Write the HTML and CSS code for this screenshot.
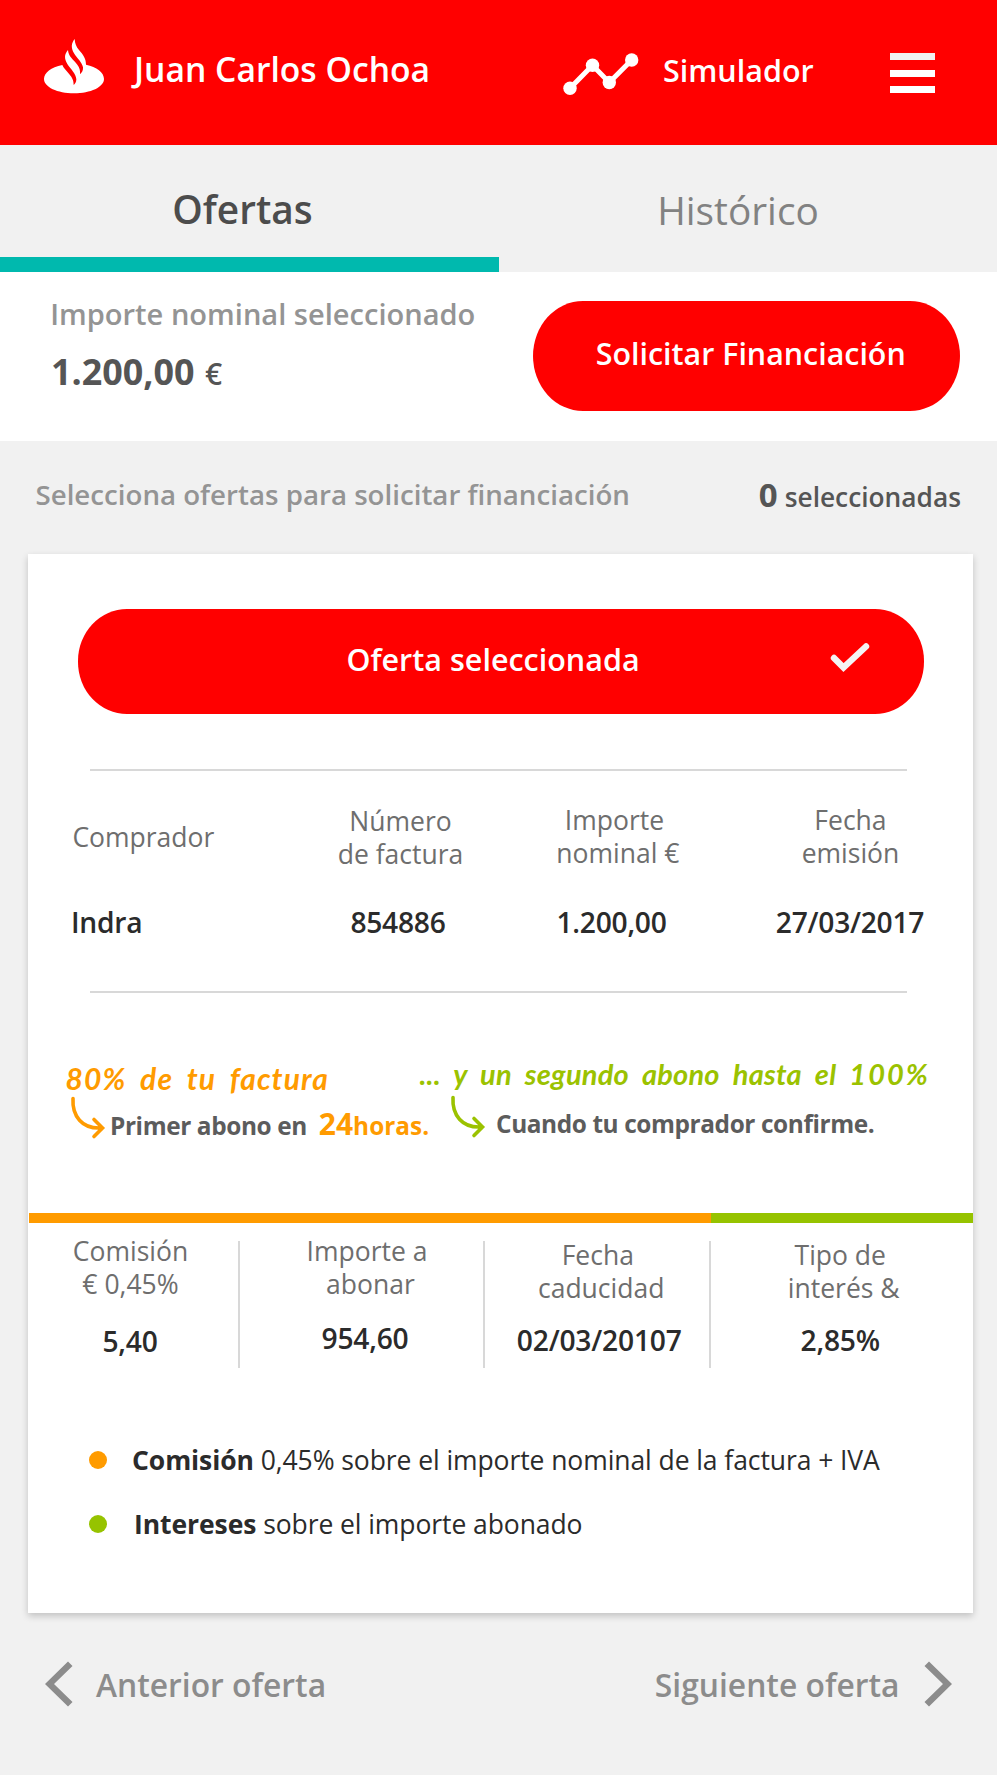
FILE: index.html
```html
<!DOCTYPE html>
<html lang="es">
<head>
    <meta charset="UTF-8">
    <meta name="viewport" content="width=device-width, initial-scale=1.0">
    <title>Ofertas</title>
    <link rel="stylesheet" href="styles.css">
</head>
<body>
    <div class="page">
        <header class="header">
            <svg class="logo" viewBox="0 0 240 222">
                <path fill="#fff" d="M79 105C45 112 24 128 24 147C24 171 64 190 114 190C164 190 204 171 204 147C204 127 182 111 150 104C150 85 141 74 129 60C120 49 117 41 116 27C106 40 104 52 114 70C124 86 138 97 141 112C142 121 138 128 132 133C133 120 131 114 124 104C112 88 97 80 96 60C84 74 85 86 94 102C104 118 120 130 121 148C121 157 117 162 113 165C113 150 108 143 100 133C90 120 83 115 79 105Z"/>
            </svg>
            <div class="user">Juan Carlos Ochoa</div>
            <svg class="chart" viewBox="0 0 80 46">
                <path fill="none" stroke="#fff" stroke-width="5" d="M10 38.3L32.5 15.3L49.3 32.5L71.7 10"/>
                <g fill="#fff">
                    <circle cx="10" cy="38.3" r="6.7"/>
                    <circle cx="32.5" cy="15.3" r="6.7"/>
                    <circle cx="49.3" cy="32.5" r="6.7"/>
                    <circle cx="71.7" cy="10" r="6.7"/>
                </g>
            </svg>
            <div class="simulator">Simulador</div>
            <div class="menu">
                <span></span>
                <span></span>
                <span></span>
            </div>
        </header>

        <nav class="tabs">
            <div class="tab active">Ofertas</div>
            <div class="tab">Histórico</div>
        </nav>

        <section class="summary">
            <div class="amount">
                <div class="amount-label">Importe nominal seleccionado</div>
                <div class="amount-value">1.200,00 <span>€</span></div>
            </div>
            <button type="button" class="btn request">Solicitar Financiación</button>
        </section>

        <div class="hint">
            <div class="hint-text">Selecciona ofertas para solicitar financiación</div>
            <div class="hint-count"><strong>0</strong><span>seleccionadas</span></div>
        </div>

        <main class="card">
            <button type="button" class="btn selected">
                Oferta seleccionada
                <svg class="check" viewBox="0 0 44 34">
                    <path fill="none" stroke="#f4f4f4" stroke-width="6.4" stroke-linecap="round" d="M4 16L13.5 25.6L36 4.5"/>
                </svg>
            </button>

            <hr>
            <div class="labels">
                <div class="buyer">Comprador</div>
                <div class="number">Número<br>de factura</div>
                <div>Importe<br>&nbsp;nominal €</div>
                <div>Fecha<br>emisión</div>
            </div>
            <div class="values">
                <div class="buyer">Indra</div>
                <div>854886</div>
                <div>1.200,00</div>
                <div>27/03/2017</div>
            </div>
            <hr class="second">

            <div class="payments">
                <div class="payment first">
                    <div class="note">80% de tu factura</div>
                    <div class="detail">
                        <svg class="arrow" viewBox="0 0 39 44">
                            <path d="M3 2.5C2 20 12 33 31 32M24 23.5L32.5 32L24 40.5"/>
                        </svg>
                        <span class="detail-text">Primer abono en</span>
                        <span class="hours"><big>24</big>horas.</span>
                    </div>
                </div>
                <div class="payment last">
                    <div class="note">... y un segundo abono hasta el <span>100%</span></div>
                    <div class="detail">
                        <svg class="arrow" viewBox="0 0 39 44">
                            <path d="M3 2.5C2 20 12 33 31 32M24 23.5L32.5 32L24 40.5"/>
                        </svg>
                        <span class="detail-text">Cuando tu comprador confirme.</span>
                    </div>
                </div>
            </div>

            <div class="bar">
                <div class="bar-orange"></div>
                <div class="bar-green"></div>
            </div>

            <div class="stats">
                <div class="stat fee">
                    <p>Comisión<br>€ 0,45%</p>
                    <b>5,40</b>
                </div>
                <div class="stat deposit">
                    <p>Importe a<br>&nbsp;abonar</p>
                    <b>954,60</b>
                </div>
                <div class="stat expiry">
                    <p>Fecha<br>&nbsp;caducidad</p>
                    <b>02/03/20107</b>
                </div>
                <div class="stat rate">
                    <p>Tipo de<br>&nbsp;interés &amp;</p>
                    <b>2,85%</b>
                </div>
            </div>

            <ul class="legend">
                <li class="orange"><div><strong>Comisión</strong> 0,45% sobre el importe nominal de la factura + IVA</div></li>
                <li class="green"><div><strong>Intereses</strong> sobre el importe abonado</div></li>
            </ul>
        </main>

        <footer class="pager">
            <div class="prev">
                <svg viewBox="0 0 29 46"><path fill="#8c8c8c" d="M1 23L24 .5L28.5 5L10 23L28.5 41L24 45.5Z"/></svg>
                Anterior oferta
            </div>
            <div class="next">
                Siguiente oferta
                <svg viewBox="0 0 29 46"><path fill="#8c8c8c" d="M28 23L5 .5L.5 5L19 23L.5 41L5 45.5Z"/></svg>
            </div>
        </footer>
    </div>
</body>
</html>
```
FILE: styles.css
```css
*{
    box-sizing: border-box;
}
body{
    margin: 0;
    background-color: #fff;
    font-family: 'Open Sans', sans-serif;
}
.page{
    width: 997px;
    height: 1775px;
    background-color: #f1f1f1;
}

/* header */
.header{
    display: grid;
    grid-template-columns: 98px 426px 103px 227px 45px;
    align-items: start;
    height: 144.5px;
    padding-left: 36px;
    background-color: #f00;
    color: #fff;
    font-weight: 600;
}
.logo{
    width: 80px;
    height: 74px;
    margin-top: 30px;
}
.user{
    font-size: 33.65px;
    line-height: 139px;
}
.chart{
    width: 80px;
    height: 46px;
    margin-top: 50px;
}
.simulator{
    font-size: 30.5px;
    line-height: 141px;
}
.menu{
    display: flex;
    flex-direction: column;
    gap: 9.5px;
    margin-top: 53px;
}
.menu span{
    height: 7px;
    background-color: #fff;
}
.menu span:first-child{
    background-color: #f1f1f1;
}

/* tabs */
.tabs{
    display: flex;
    height: 127.5px;
}
.tab{
    width: 498px;
    padding: 17px 20px 0 0;
    color: #828282;
    font-size: 38.8px;
    line-height: 97px;
    text-align: center;
}
.tab.active{
    width: 499px;
    padding-right: 14px;
    border-bottom: 15px solid #00b9ae;
    color: #4c4c4c;
    font-weight: 600;
    line-height: 95px;
}

/* buttons */
.btn{
    border: 0;
    background-color: #f00;
    color: #fff;
    font-family: inherit;
    font-weight: 600;
}

/* selected amount */
.summary{
    display: flex;
    justify-content: space-between;
    height: 169px;
    padding: 22px 37.5px 0 50.2px;
    background-color: #fff;
}
.amount-label{
    color: #949494;
    font-size: 29.05px;
    font-weight: 600;
    line-height: 40px;
}
.amount-value{
    display: flex;
    align-items: baseline;
    gap: 10.5px;
    margin: 8px 0 0 .7px;
    color: #555;
    font-size: 35.9px;
    font-weight: 700;
    line-height: 60px;
}
.amount-value span{
    font-size: 30px;
    font-weight: 600;
}
.request{
    width: 426.5px;
    height: 109.5px;
    margin-top: 7px;
    padding: 0 0 5px 9px;
    border-radius: 50px / 55px;
    font-size: 30.4px;
}

.hint{
    display: flex;
    justify-content: space-between;
    height: 113px;
    padding: 0 36px 0 35.5px;
    font-weight: 600;
}
.hint-text{
    color: #949494;
    font-size: 27.68px;
    line-height: 107px;
}
.hint-count{
    display: flex;
    align-items: baseline;
    gap: 7px;
    color: #555;
    font-size: 26.3px;
    line-height: 107px;
}
.hint-count strong{
    font-size: 33px;
    font-weight: 700;
}

/* offer card */
.card{
    width: 945px;
    height: 1059px;
    margin-left: 28px;
    padding-top: 55px;
    background-color: #fff;
    box-shadow: 0 3px 7px rgba(0, 0, 0, .2);
}
.selected{
    display: flex;
    align-items: center;
    justify-content: space-between;
    width: 846px;
    height: 105px;
    margin-left: 49.5px;
    padding: 0 49.5px 4.5px 269px;
    border-radius: 49px / 52px;
    font-size: 30.5px;
}
.check{
    width: 44px;
    height: 34px;
}
hr{
    height: 2px;
    margin: 55px 66px 0 62px;
    border: 0;
    background-color: #d8d8d8;
}
.labels, .values{
    display: grid;
    text-align: center;
}
.labels{
    grid-template-columns: 257.6px 141px 287px 185px;
    align-items: center;
    padding: 32px 0 0 44.4px;
    color: #6e6e6e;
    font-size: 26.5px;
    line-height: 33px;
}
.labels .number{
    padding-top: 2px;
}
.values{
    grid-template-columns: 259px 136px 291px 186px;
    margin-top: 31px;
    padding-left: 43px;
    color: #2b2b2b;
    font-size: 28.2px;
    font-weight: 600;
    line-height: 40px;
    letter-spacing: -.25px;
}
.buyer{
    text-align: left;
}
hr.second{
    margin-top: 49px;
}

/* payments */
.payments{
    display: flex;
    height: 220px;
    padding: 61px 0 0 37.5px;
}
.first{
    width: 354px;
    padding-top: 4px;
    color: #ff9b00;
}
.last{
    color: #9bc200;
}
.note{
    font-family: Lato, sans-serif;
    font-size: 30px;
    font-style: italic;
    font-weight: 700;
    line-height: 40px;
    white-space: nowrap;
    letter-spacing: 1.1px;
    word-spacing: 6px;
}
.last .note{
    font-size: 29px;
    letter-spacing: .2px;
    word-spacing: 6.5px;
}
.note span{
    letter-spacing: 2px;
}
.detail{
    display: flex;
    align-items: baseline;
    font-size: 24.4px;
    font-weight: 700;
    line-height: 52px;
    letter-spacing: -.4px;
    white-space: nowrap;
}
.last .detail{
    line-height: 60px;
}
.detail-text{
    color: #5c5c5c;
}
.arrow{
    align-self: flex-start;
    flex: none;
    width: 39px;
    height: 44px;
    margin: -2.5px 1px 0 4.5px;
    fill: none;
    stroke: currentColor;
    stroke-width: 3.6;
    stroke-linecap: round;
}
.last .arrow{
    margin: .5px 7px 0 30.5px;
}
.hours{
    margin-left: 12px;
    letter-spacing: 0;
}
.hours big{
    font-size: 30px;
}

.bar{
    display: flex;
    height: 10px;
    margin-left: 1px;
}
.bar-orange{
    width: 682px;
    background-color: #ff9b00;
}
.bar-green{
    flex: 1;
    background-color: #96c300;
}

/* stats */
.stats{
    display: grid;
    grid-template-columns: 212px 245px 225.5px 262.5px;
    height: 127px;
    margin-top: 18px;
    text-align: center;
}
.stat{
    border-right: 2px solid #d8d8d8;
}
.stat p{
    margin: -6px 0 0;
    color: #6e6e6e;
    font-size: 26.5px;
    line-height: 33px;
}
.stat b{
    display: block;
    margin-top: 17px;
    color: #2b2b2b;
    font-size: 28.2px;
    font-weight: 600;
    line-height: 40px;
    letter-spacing: -.2px;
}
.fee{
    padding-right: 5px;
}
.fee b{
    margin-top: 20px;
    padding-right: 1px;
}
.deposit{
    padding-left: 11px;
}
.deposit b{
    padding-right: 4px;
}
.expiry{
    padding-left: 2px;
}
.expiry p, .rate p{
    margin-top: -2px;
}
.expiry b, .rate b{
    margin-top: 15px;
}
.expiry b{
    padding-left: 3px;
}
.rate{
    padding-right: 3px;
    border-right: 0;
}

.legend{
    margin: 72px 0 0;
    padding: 0 0 0 60.5px;
    list-style: none;
    color: #2b2b2b;
    font-size: 26.5px;
    line-height: 40px;
    letter-spacing: -.08px;
}
.legend li{
    display: flex;
    align-items: center;
    gap: 25.5px;
    margin-bottom: 24px;
}
.legend li::before{
    content: '';
    width: 18px;
    height: 18px;
    border-radius: 50%;
    background-color: #ff9b00;
}
.legend .green{
    gap: 27.5px;
}
.legend .green::before{
    background-color: #96c300;
}

/* previous / next */
.pager{
    display: flex;
    justify-content: space-between;
    height: 142px;
    padding: 0 44.5px 0 44px;
    color: #8c8c8c;
    font-size: 31.8px;
    font-weight: 600;
}
.prev, .next{
    display: flex;
    align-items: center;
    gap: 23px;
}
.next{
    gap: 24px;
}
.pager svg{
    width: 29px;
    height: 46px;
}
```
